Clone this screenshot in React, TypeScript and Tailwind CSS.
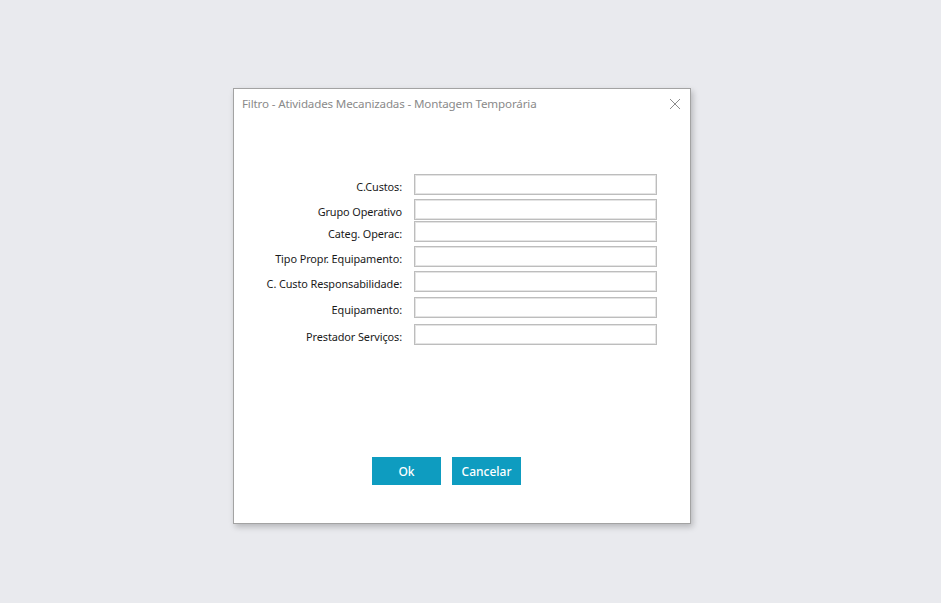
import React from "react";

const rows: { label: string; mt: string }[] = [
  { label: "C.Custos:", mt: "mt-0" },
  { label: "Grupo Operativo", mt: "mt-[4px]" },
  { label: "Categ. Operac:", mt: "mt-[1px]" },
  { label: "Tipo Propr. Equipamento:", mt: "mt-[4px]" },
  { label: "C. Custo Responsabilidade:", mt: "mt-[4px]" },
  { label: "Equipamento:", mt: "mt-[5px]" },
  { label: "Prestador Serviços:", mt: "mt-[6px]" },
];

export default function App() {
  return (
    <div
      className="min-h-[603px] w-full bg-[#e9eaee] pl-[233px] pt-[88px]"
      style={{ fontFamily: '"Noto Sans", "Open Sans", sans-serif' }}
    >
      <div className="flex h-[436px] w-[458px] flex-col border border-[#a3a3a3] bg-white shadow-[2px_3px_6px_rgba(0,0,0,0.22)]">
        <div className="flex h-[30px] items-center justify-between pl-[8px] pr-[9px]">
          <span className="text-[11.6px] tracking-[-0.15px] text-[#8a8a8a]">
            Filtro - Atividades Mecanizadas - Montagem Temporária
          </span>
          <svg width="12" height="12" viewBox="0 0 12 12" className="mt-[-1px]">
            <path d="M1 1 L11 11 M11 1 L1 11" stroke="#8c8c8c" strokeWidth="1" fill="none" />
          </svg>
        </div>
        <div className="mt-[55px] flex flex-col">
          {rows.map((r) => (
            <div key={r.label} className={`flex items-end ${r.mt}`}>
              <div className="w-[168px] pb-[1px] text-right text-[10.9px] leading-[14px] tracking-[-0.1px] text-[#1a1a1a]">
                {r.label}
              </div>
              <div className="ml-[12px] h-[21px] w-[243px] border border-[#bdbdbd] shadow-[inset_0_0_0_1px_#e4e4e4]" />
            </div>
          ))}
        </div>
        <div className="mt-[112px] flex gap-[11px] pl-[138px]">
          <button className="flex h-[28px] w-[69px] items-center justify-center bg-[#0e9cc0] pt-[2px] text-[12px] font-medium text-white">
            Ok
          </button>
          <button className="flex h-[28px] w-[69px] items-center justify-center bg-[#0e9cc0] pt-[2px] text-[12px] font-medium text-white">
            Cancelar
          </button>
        </div>
      </div>
    </div>
  );
}
